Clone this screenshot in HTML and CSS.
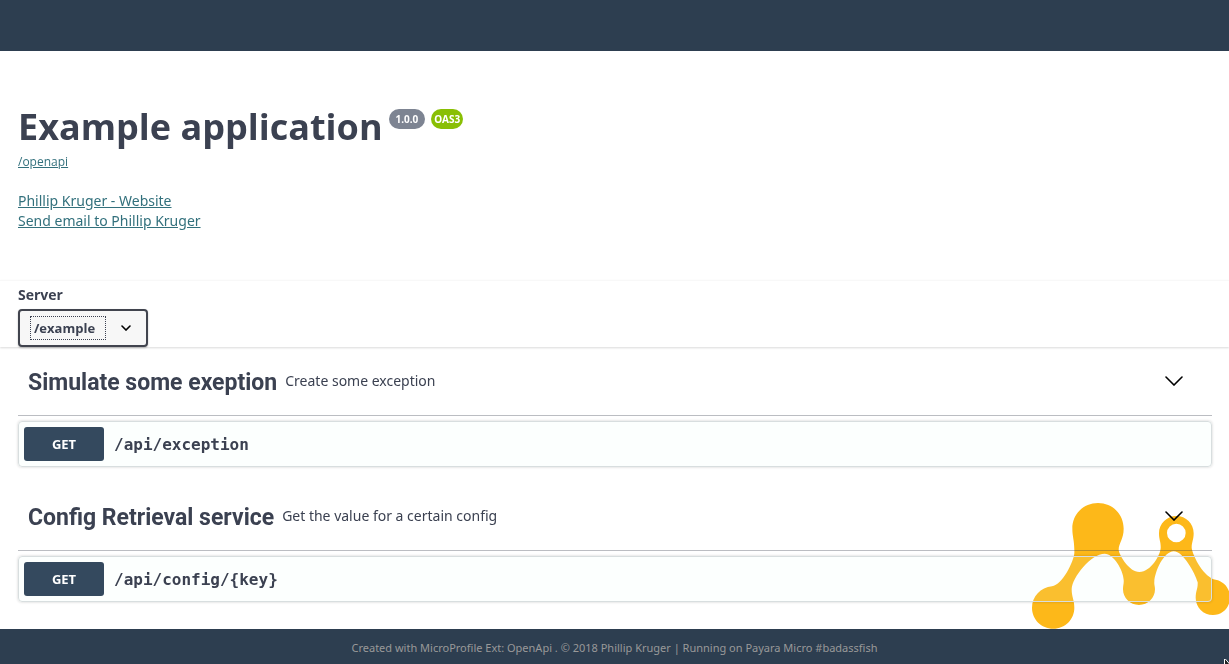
FILE: index.html
```html
<!DOCTYPE html>
<html lang="en">
<head>
<meta charset="utf-8">
<title>Example application</title>
<link rel="stylesheet" href="styles.css">
</head>
<body>
<header class="topbar"></header>
<svg class="fish" viewBox="39 39 591 378" aria-hidden="true">
  <path fill="#fdb819" fill-rule="evenodd" d="M237 39C281 39 314 73 314 116C314 148 299 158 299 180C302 198 331 246 361 246C397 246 424 194 425 175C426 156 420 150 420 130C420 101 444 78 472 78C501 78 524 101 524 130C524 150 518 156 518 174C522 200 556 264 590 269C615 274 633 295 633 322C633 352 611 375 582 375C553 375 530 352 530 323C530 303 537 297 536 277C528 250 493 184 464 184C435 184 407 244 406 276C405 284 408 289 408 298C408 324 387 345 360 345C333 345 312 324 312 298C312 286 315 280 314 269C313 241 284 191 257 191C216 191 160 261 158 297C158 322 166 330 166 353C166 388 138 416 103 416C67 416 39 388 39 353C39 319 65 293 99 289C130 286 164 214 166 190C167 150 160 142 160 116C160 73 193 39 237 39ZM472 101A28 28 0 1 0 472 157A28 28 0 1 0 472 101Z"/>
</svg>
<main class="page">
  <section class="info">
    <div class="title-row">
      <h1 class="title">Example application</h1>
      <span class="badge">1.0.0</span>
      <span class="badge badge-oas">OAS3</span>
    </div>
    <a class="spec-link" href="/openapi">/openapi</a>
    <div class="contact">
      <a href="#website">Phillip Kruger - Website</a>
      <a href="#email">Send email to Phillip Kruger</a>
    </div>
  </section>
  <section class="servers">
    <label class="server-label" for="server">Server</label>
    <div class="select-box">
      <select class="server-select" id="server"><option>/example</option></select>
      <svg class="select-arrow" viewBox="0 0 10 6" aria-hidden="true"><path d="M1 1L5 5L9 1"/></svg>
    </div>
  </section>
  <section class="tag">
    <div class="tag-head">
      <h2 class="tag-name">Simulate some exeption</h2>
      <p class="tag-text">Create some exception</p>
      <button class="toggle" type="button" aria-label="Collapse Simulate some exeption"><svg viewBox="0 0 18 10"><path d="M1 1L9 9L17 1"/></svg></button>
    </div>
    <div class="operation">
      <button class="method" type="button">GET</button>
      <span class="path">/api/exception</span>
    </div>
  </section>
  <section class="tag">
    <div class="tag-head">
      <h2 class="tag-name">Config Retrieval service</h2>
      <p class="tag-text">Get the value for a certain config</p>
      <button class="toggle" type="button" aria-label="Collapse Config Retrieval service"><svg viewBox="0 0 18 10"><path d="M1 1L9 9L17 1"/></svg></button>
    </div>
    <div class="operation">
      <button class="method" type="button">GET</button>
      <span class="path">/api/config/{key}</span>
    </div>
  </section>
</main>
<footer class="footer">Created with MicroProfile Ext: OpenApi . © 2018 Phillip Kruger | Running on Payara Micro #badassfish</footer>
<svg class="pointer" viewBox="0 0 5 5" aria-hidden="true"><path d="M0.5 -1V6H6V5.500Z" fill="#222" stroke="#fff"/></svg>
</body>
</html>
```
FILE: styles.css
```css
*, *::before { box-sizing: border-box; }
body {
  margin: 0;
  min-height: 100vh;
  display: flex;
  flex-direction: column;
  background: #fff;
  color: #3b4151;
  font-family: "Noto Sans", sans-serif;
  font-size: 14px;
  line-height: 20px;
}
h1, h2, p { margin: 0; }
a { color: #32707c; }
.topbar { height: 51px; background: #2d3e50; }
.page { position: relative; flex: 1; }
.fish {
  position: fixed;
  right: 0;
  bottom: 35px;
  width: 197px;
  height: 126px;
}
.pointer {
  position: fixed;
  right: 0;
  bottom: 0;
  width: 5px;
  height: 5px;
}
.info { padding: 51px 18px 49px; }
.title-row { display: flex; align-items: flex-start; gap: 6px; }
.title { font: 700 36px/50px "Open Sans", sans-serif; }
.badge {
  margin-top: 7px;
  padding: 0 7px;
  border-radius: 10px;
  background: #7d8492;
  color: #fff;
  font-size: 10px;
  font-weight: 700;
}
.badge-oas { padding: 0 3px; background: #89bf04; }
.spec-link {
  display: block;
  width: fit-content;
  font-family: "Open Sans", sans-serif;
  font-size: 12px;
}
.contact {
  display: flex;
  flex-direction: column;
  align-items: flex-start;
  margin-top: 19px;
}
.servers {
  padding: 4px 18px 0;
  border-top: 1px solid #f8f8f8;
  box-shadow: 0 1px 2px rgba(0, 0, 0, .15);
}
.server-label {
  display: block;
  margin-bottom: 4px;
  font-family: "Open Sans", sans-serif;
  font-weight: 700;
}
.select-box { position: relative; width: 130px; }
.server-select {
  display: block;
  width: 100%;
  height: 38px;
  padding: 0 14px;
  appearance: none;
  border: 2px solid #41444e;
  border-radius: 4px;
  background: #f7f7f7;
  box-shadow: 0 1px 2px rgba(0, 0, 0, .25);
  color: #3b4151;
  font: 700 13px "Open Sans", sans-serif;
}
.select-box::before {
  content: "";
  position: absolute;
  top: 7px;
  left: 12px;
  width: 76px;
  height: 24px;
  border: 1px dotted #3b4151;
  pointer-events: none;
}
.select-arrow {
  position: absolute;
  top: 16px;
  right: 17px;
  width: 10px;
  height: 6px;
}
.select-arrow path, .toggle path {
  fill: none;
  stroke: #000;
  stroke-width: 1.6;
  stroke-linecap: round;
}
.tag { padding: 0 17px 0 18px; margin-bottom: 15px; }
.tag + .tag { margin-bottom: 27px; }
.tag-head {
  display: flex;
  align-items: center;
  gap: 8px;
  height: 69px;
  padding: 0 29px 0 10px;
  border-bottom: 1px solid rgba(59, 65, 81, .35);
}
.tag-name { padding-top: 3px; font: 700 23px/32px Roboto, sans-serif; }
.toggle {
  width: 18px;
  height: 10px;
  margin-left: auto;
  padding: 0;
  border: 0;
  background: none;
}
.toggle svg { display: block; }
.operation {
  display: flex;
  align-items: center;
  gap: 10px;
  margin-top: 5px;
  padding: 5px;
  border: 1px solid #d8dedf;
  border-radius: 4px;
  background: rgba(225, 255, 248, .1);
  box-shadow: 0 0 3px rgba(0, 0, 0, .19);
}
.method {
  width: 80px;
  height: 34px;
  padding: 0;
  border: 0;
  border-radius: 3px;
  background: #34495e;
  color: #fff;
  font: 700 13px "Noto Sans", sans-serif;
}
.path { font: 700 16px "DejaVu Sans Mono", monospace; }
.footer {
  position: relative;
  padding: 9px 16px 6px;
  background: #2d3e50;
  color: #999;
  font-size: 11px;
  text-align: center;
}
```
